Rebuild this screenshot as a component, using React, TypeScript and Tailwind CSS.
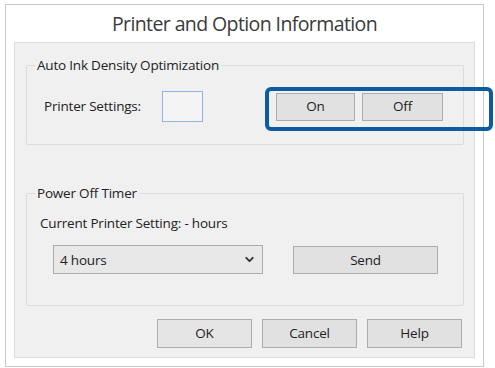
import { ChevronDown } from "lucide-react";

const btn =
  "h-[28px] border border-[#adadad] bg-[#e1e1e1] text-[13.5px] text-[#1e1e1e] flex items-center justify-center";

export default function App() {
  return (
    <div className="relative w-[495px] h-[368px] bg-white overflow-hidden font-['Open_Sans',sans-serif] tracking-[-0.2px] text-[#222]">
      <div className="ml-[5px] mt-[4px] w-[479px] h-[363px] border border-[#c8c8c8] bg-white flex flex-col">
        {/* title */}
        <div className="h-[37px] flex items-center justify-center text-[19.5px] text-[#3a3a3a] tracking-[-0.6px]">
          Printer and Option Information
        </div>

        <div className="mx-[8px] flex-1 mb-[8px] border border-[#dcdcdc] bg-[#f0f0f0] flex flex-col">
          {/* Auto Ink Density */}
          <fieldset className="ml-[11px] mt-[14px] w-[438px] h-[88px] border border-[#dcdcdc] rounded-[2px] px-[17px]">
            <legend className="ml-[-9px] px-[2px] text-[13.5px] leading-[16px]">
              Auto Ink Density Optimization
            </legend>
            <div className="flex items-center mt-[18px]">
              <span className="text-[13.5px] w-[118px]">Printer Settings:</span>
              <div className="w-[41px] h-[31px] border border-[#8fb4e0] bg-[#f4f4f4]" />
              <div className="ml-[73px] flex gap-[7px]">
                <div className={`${btn} w-[79px]`}>On</div>
                <div className={`${btn} w-[81px]`}>Off</div>
              </div>
            </div>
          </fieldset>

          {/* Power Off Timer */}
          <fieldset className="ml-[11px] mt-[40px] w-[438px] h-[121px] border border-[#dcdcdc] rounded-[2px] px-[13px]">
            <legend className="ml-[-5px] px-[2px] text-[13.5px] leading-[16px]">
              Power Off Timer
            </legend>
            <div className="mt-[12px] text-[13.5px]">Current Printer Setting: - hours</div>
            <div className="flex items-center mt-[12px] ml-[13px]">
              <div className="w-[210px] h-[29px] border border-[#acacac] bg-[#e8e8e8] flex items-center justify-between pl-[6px] pr-[6px] text-[13.5px]">
                <span>4 hours</span>
                <ChevronDown className="w-[13px] h-[13px] text-[#333]" strokeWidth={3.5} />
              </div>
              <div className={`${btn} ml-[30px] w-[145px]`}>Send</div>
            </div>
          </fieldset>

          {/* dialog buttons */}
          <div className="flex justify-end gap-[10px] mt-[13px] mr-[12px]">
            <div className={`${btn} h-[29px] w-[95px] border-[#5a9ee3] bg-[#e5e5e5]`}>OK</div>
            <div className={`${btn} h-[29px] w-[95px]`}>Cancel</div>
            <div className={`${btn} h-[29px] w-[95px]`}>Help</div>
          </div>
        </div>
      </div>

      {/* highlight frame */}
      <div className="absolute left-[265px] top-[87px] w-[228px] h-[44px] border-[4px] border-[#0e5c9f] rounded-[6px]" />
    </div>
  );
}
